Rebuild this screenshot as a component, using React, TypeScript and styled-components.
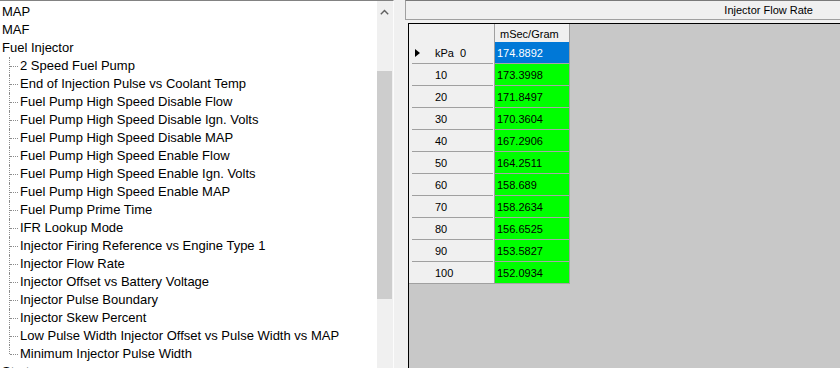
import React from "react";
import styled, { createGlobalStyle } from "styled-components";

const GlobalStyle = createGlobalStyle`
  html, body {
    margin: 0;
    padding: 0;
    background: #f0f0f0;
  }
  body {
    font-family: "Liberation Sans", Arial, sans-serif;
  }
`;

const Window = styled.div`
  display: flex;
  width: 840px;
  height: 368px;
  overflow: hidden;
  background: #f0f0f0;
`;

const TreePane = styled.div`
  display: flex;
  flex: none;
  width: 393px;
  border-top: 1px solid #828282;
  border-right: 1px solid #fcfcfc;
  background: #fff;
`;

const TreeList = styled.ul`
  flex: 1;
  margin: 0;
  padding: 2px 0 0 0;
  list-style: none;
  overflow: hidden;
  font-size: 13px;
  color: #000;
`;

const Node = styled.li<{ $child?: boolean }>`
  display: flex;
  height: 18px;
  line-height: 18px;
  white-space: nowrap;
  padding-left: ${(p) => (p.$child ? "0" : "2px")};
`;

const Guide = styled.span<{ $last?: boolean }>`
  position: relative;
  flex: none;
  width: 20px;
  height: 18px;

  &::before {
    content: "";
    position: absolute;
    left: 9px;
    top: 0;
    height: ${(p) => (p.$last ? "9px" : "18px")};
    border-left: 1px dotted #8c8c8c;
  }

  &::after {
    content: "";
    position: absolute;
    left: 10px;
    top: 9px;
    width: 8px;
    border-top: 1px dotted #8c8c8c;
  }
`;

const ScrollBar = styled.div`
  display: flex;
  flex-direction: column;
  flex: none;
  width: 16px;
  background: #f0f0f0;
`;

const ArrowButton = styled.div`
  display: flex;
  align-items: center;
  justify-content: center;
  height: 21px;
  padding-right: 1px;
`;

const Thumb = styled.div`
  width: 15px;
  height: 228px;
  margin-top: 49px;
  background: #cdcdcd;
`;

const RightPane = styled.div`
  display: flex;
  flex-direction: column;
  flex: 1;
  padding-left: 11px;
`;

const TitleBar = styled.div`
  display: flex;
  align-items: center;
  justify-content: flex-end;
  box-sizing: border-box;
  height: 20px;
  padding-right: 27px;
  border: 1px solid #a0a0a0;
  border-top-color: #7a7a7a;
  border-right: none;
  font-size: 11px;
  color: #000;
`;

const GridArea = styled.div`
  flex: 1;
  margin: 3px 0 0 3px;
  border-top: 1px solid #000;
  border-left: 1px solid #000;
  background: #c8c8c8;
`;

const Table = styled.div`
  display: grid;
  grid-template-columns: 86px 75px;
  grid-template-rows: 18px;
  grid-auto-rows: 22px;
  width: fit-content;
  font-size: 11px;
`;

const Corner = styled.div`
  background: #f0f0f0;
  border-right: 1px solid #a0a0a0;
`;

const ColumnHeader = styled.div`
  display: flex;
  align-items: center;
  padding: 1px 0 0 5px;
  background: #f0f0f0;
  border-right: 1px solid #a0a0a0;
  color: #000;
`;

const RowHeader = styled.div<{ $last?: boolean }>`
  position: relative;
  display: flex;
  align-items: center;
  background: #f0f0f0;
  border-right: 1px solid #a0a0a0;
  border-bottom: ${(p) => (p.$last ? "1px solid #a0a0a0" : "none")};
  color: #000;

  &::after {
    content: "";
    display: ${(p) => (p.$last ? "none" : "block")};
    position: absolute;
    left: 3px;
    right: 1px;
    bottom: 0;
    border-top: 1px solid #a0a0a0;
  }
`;

const IndicatorSlot = styled.span`
  display: flex;
  align-items: center;
  flex: none;
  width: 20px;
  height: 100%;
  padding-left: 6px;
`;

const Triangle = styled.span<{ $show: boolean }>`
  width: 0;
  height: 0;
  border-left: 5px solid ${(p) => (p.$show ? "#000" : "transparent")};
  border-top: 4px solid transparent;
  border-bottom: 4px solid transparent;
`;

const Cell = styled.div<{ $selected?: boolean }>`
  display: flex;
  align-items: center;
  padding-left: 2px;
  background: ${(p) => (p.$selected ? "#0078d7" : "#00ff00")};
  color: ${(p) => (p.$selected ? "#fff" : "#000")};
  border-right: 1px solid #a0a0a0;
  border-bottom: 1px solid #a6a6a6;
`;

const children = [
  "2 Speed Fuel Pump",
  "End of Injection Pulse vs Coolant Temp",
  "Fuel Pump High Speed Disable Flow",
  "Fuel Pump High Speed Disable Ign. Volts",
  "Fuel Pump High Speed Disable MAP",
  "Fuel Pump High Speed Enable Flow",
  "Fuel Pump High Speed Enable Ign. Volts",
  "Fuel Pump High Speed Enable MAP",
  "Fuel Pump Prime Time",
  "IFR Lookup Mode",
  "Injector Firing Reference vs Engine Type 1",
  "Injector Flow Rate",
  "Injector Offset vs Battery Voltage",
  "Injector Pulse Boundary",
  "Injector Skew Percent",
  "Low Pulse Width Injector Offset vs Pulse Width vs MAP",
  "Minimum Injector Pulse Width",
];

const rows: [string, string][] = [
  ["kPa\u00a0\u00a00", "174.8892"],
  ["10", "173.3998"],
  ["20", "171.8497"],
  ["30", "170.3604"],
  ["40", "167.2906"],
  ["50", "164.2511"],
  ["60", "158.689"],
  ["70", "158.2634"],
  ["80", "156.6525"],
  ["90", "153.5827"],
  ["100", "152.0934"],
];

const App = () => {
  return (
    <Window>
      <GlobalStyle />
      <TreePane>
        <TreeList>
          <Node>MAP</Node>
          <Node>MAF</Node>
          <Node>Fuel Injector</Node>
          {children.map((name, i) => (
            <Node key={name} $child>
              <Guide $last={i === children.length - 1} />
              {name}
            </Node>
          ))}
          <Node>Startup</Node>
        </TreeList>
        <ScrollBar>
          <ArrowButton>
            <svg width="9" height="6" viewBox="0 0 9 6">
              <polyline
                points="0.8,5.2 4.5,1.5 8.2,5.2"
                fill="none"
                stroke="#606060"
                strokeWidth="1.4"
              />
            </svg>
          </ArrowButton>
          <Thumb />
        </ScrollBar>
      </TreePane>
      <RightPane>
        <TitleBar>Injector Flow Rate</TitleBar>
        <GridArea>
          <Table>
            <Corner />
            <ColumnHeader>mSec/Gram</ColumnHeader>
            {rows.map(([label, value], i) => (
              <React.Fragment key={label}>
                <RowHeader $last={i === rows.length - 1}>
                  <IndicatorSlot>
                    <Triangle $show={i === 0} />
                  </IndicatorSlot>
                  {label}
                </RowHeader>
                <Cell $selected={i === 0}>{value}</Cell>
              </React.Fragment>
            ))}
          </Table>
        </GridArea>
      </RightPane>
    </Window>
  );
};

export default App;
